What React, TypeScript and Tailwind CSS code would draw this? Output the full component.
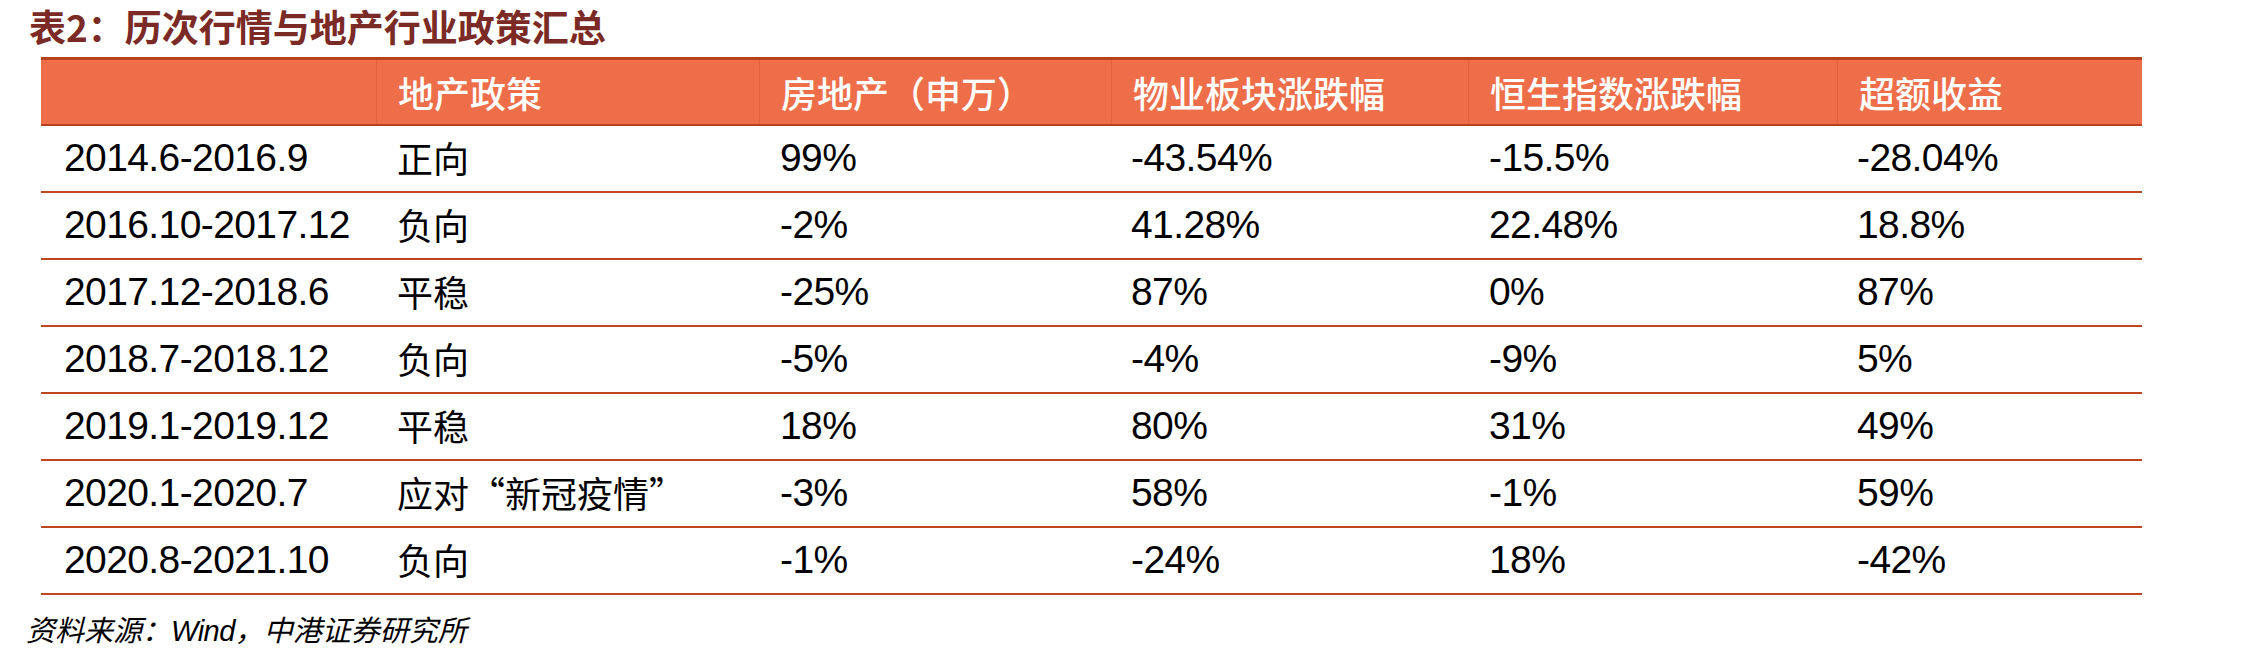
import React from 'react';

type Row = {
  period: string;
  policy: string;
  property: string;
  mgmt: string;
  hsi: string;
  excess: string;
};

const headers = ['', '地产政策', '房地产（申万）', '物业板块涨跌幅', '恒生指数涨跌幅', '超额收益'];

const rows: Row[] = [
  { period: '2014.6-2016.9', policy: '正向', property: '99%', mgmt: '-43.54%', hsi: '-15.5%', excess: '-28.04%' },
  { period: '2016.10-2017.12', policy: '负向', property: '-2%', mgmt: '41.28%', hsi: '22.48%', excess: '18.8%' },
  { period: '2017.12-2018.6', policy: '平稳', property: '-25%', mgmt: '87%', hsi: '0%', excess: '87%' },
  { period: '2018.7-2018.12', policy: '负向', property: '-5%', mgmt: '-4%', hsi: '-9%', excess: '5%' },
  { period: '2019.1-2019.12', policy: '平稳', property: '18%', mgmt: '80%', hsi: '31%', excess: '49%' },
  { period: '2020.1-2020.7', policy: '应对“新冠疫情”', property: '-3%', mgmt: '58%', hsi: '-1%', excess: '59%' },
  { period: '2020.8-2021.10', policy: '负向', property: '-1%', mgmt: '-24%', hsi: '18%', excess: '-42%' },
];

const cols = 'grid grid-cols-[335px_383px_352px_357px_369px_306px]';
const num = "font-['Liberation_Sans',Arial,sans-serif] text-[39px] tracking-[-0.6px] text-black";
const cjk = "font-['Noto_Sans_CJK_SC',sans-serif] text-[36px] text-black pb-[4px]";

export default function App() {
  return (
    <div className="w-[2244px] h-[659px] bg-white">
      {/* Title */}
      <div className="h-[57px] pl-[29px] leading-[52px] text-[37px] font-bold text-[#7b2a25] font-['Noto_Sans_CJK_SC',sans-serif]">
        表2：历次行情与地产行业政策汇总
      </div>

      <div className="ml-[41px] w-[2101px]">
        {/* Header */}
        <div className={`${cols} h-[69px] bg-[#ee6e4a] border-t-[3px] border-b-[2px] border-[#b8401f] text-white`}>
          {headers.map((h, i) => (
            <div
              key={i}
              className={`flex items-center pl-[21px] text-[36px] font-medium font-['Noto_Sans_CJK_SC',sans-serif] ${
                i > 0 ? 'border-l border-[#e4603e]' : ''
              }`}
            >
              {h}
            </div>
          ))}
        </div>

        {/* Body */}
        {rows.map((r) => (
          <div key={r.period} className={`${cols} h-[67px] border-b-[2px] border-[#c0461f]`}>
            <div className={`flex items-center pl-[23px] ${num}`}>{r.period}</div>
            <div className={`flex items-center pl-[21px] ${cjk}`}>{r.policy}</div>
            <div className={`flex items-center pl-[21px] ${num}`}>{r.property}</div>
            <div className={`flex items-center pl-[20px] ${num}`}>{r.mgmt}</div>
            <div className={`flex items-center pl-[21px] ${num}`}>{r.hsi}</div>
            <div className={`flex items-center pl-[20px] ${num}`}>{r.excess}</div>
          </div>
        ))}
      </div>

      {/* Source */}
      <div className="pl-[26px] pt-[13px] leading-[40px] text-[29px] italic text-black font-['Noto_Sans_CJK_SC',sans-serif]">
        资料来源：<span className="font-['Liberation_Sans',Arial,sans-serif] tracking-[-0.5px]">Wind</span>，中港证券研究所
      </div>
    </div>
  );
}
